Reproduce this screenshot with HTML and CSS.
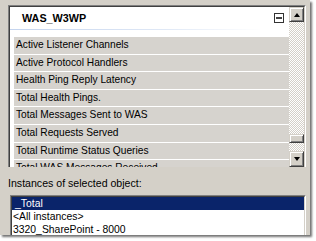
FILE: index.html
```html
<!DOCTYPE html>
<html>
<head>
<meta charset="utf-8">
<link rel="stylesheet" href="styles.css">
</head>
<body>
<div class="shot">
  <div class="box">
    <div class="box-in">
      <div class="main">
        <div class="head">
          <span class="title">WAS_W3WP</span>
          <span class="collapse"><span class="minus"></span></span>
        </div>
        <div class="rows">
          <div class="row">Active Listener Channels</div>
          <div class="row">Active Protocol Handlers</div>
          <div class="row">Health Ping Reply Latency</div>
          <div class="row">Total Health Pings.</div>
          <div class="row">Total Messages Sent to WAS</div>
          <div class="row">Total Requests Served</div>
          <div class="row">Total Runtime Status Queries</div>
          <div class="row">Total WAS Messages Received</div>
        </div>
      </div>
      <div class="scroll">
        <div class="btn up"><span class="tri-up"></span></div>
        <div class="track grow"></div>
        <div class="btn thumb"></div>
        <div class="track small"></div>
        <div class="btn down"><span class="tri-down"></span></div>
      </div>
    </div>
  </div>
  <div class="label">Instances of selected object:</div>
  <div class="inst">
    <div class="inst-in">
      <div class="item sel">_Total</div>
      <div class="item">&lt;All instances&gt;</div>
      <div class="item">3320_SharePoint - 8000</div>
    </div>
  </div>
</div>
</body>
</html>
```
FILE: styles.css
```css
html, body {
  margin: 0;
  background: #fff;
}
body {
  width: 316px;
  height: 241px;
  overflow: hidden;
}
.shot {
  width: 310px;
  height: 235px;
  box-sizing: border-box;
  padding: 5px 0 0 8px;
  background: #d4d0c8;
  box-shadow: 2px 2px 2px rgba(0, 0, 0, 0.55);
  overflow: hidden;
  font-family: "Liberation Sans", Arial, sans-serif;
  color: #000;
}
.box {
  width: 298px;
  height: 162px;
  box-sizing: border-box;
  border-style: solid;
  border-width: 1px 1px 0 1px;
  border-color: #808080 #fff #808080 #808080;
}
.box-in {
  height: 100%;
  box-sizing: border-box;
  border-style: solid;
  border-width: 1px 1px 0 1px;
  border-color: #404040 #d4d0c8 #404040 #404040;
  display: flex;
}
.main {
  flex: 1;
  min-width: 0;
  background: #fff;
  overflow: hidden;
}
.head {
  height: 22px;
  display: flex;
  align-items: center;
  justify-content: space-between;
  padding: 0 5px 0 12px;
  border-bottom: 1px solid transparent;
  border-image: linear-gradient(90deg, #c4d4ee, #dfe8f6 55%, #fff 90%) 1;
}
.title {
  font-weight: bold;
  font-size: 10.8px;
}
.collapse {
  width: 10px;
  height: 10px;
  box-sizing: border-box;
  border: 1px solid #333;
  display: flex;
  align-items: center;
  justify-content: center;
}
.minus {
  width: 6px;
  height: 2px;
  background: #444;
}
.rows {
  margin: 6px 0 0 4px;
}
.row {
  height: 17.6px;
  box-sizing: border-box;
  border-top: 1px solid #fff;
  background: #d6d3ce;
  padding-left: 2px;
  font-size: 10.2px;
  line-height: 16.6px;
  white-space: nowrap;
}
.scroll {
  width: 15px;
  display: flex;
  flex-direction: column;
}
.btn {
  box-sizing: border-box;
  background: #d4d0c8;
  border: 1px solid;
  border-color: #d4d0c8 #404040 #404040 #d4d0c8;
  box-shadow: inset 1px 1px 0 #fff, inset -1px -1px 0 #808080;
  display: flex;
  align-items: center;
  justify-content: center;
}
.up { height: 15px; }
.down { height: 16px; }
.thumb { height: 9px; }
.track {
  background: repeating-conic-gradient(#fff 0 25%, #d4d0c8 0 50%) 0 0 / 2px 2px;
}
.grow { flex: 1; }
.small { height: 8px; }
.tri-up, .tri-down {
  width: 0;
  height: 0;
  border-left: 3.5px solid transparent;
  border-right: 3.5px solid transparent;
}
.tri-up { border-bottom: 4px solid #000; }
.tri-down { border-top: 4px solid #000; }
.label {
  margin-top: 10px;
  font-size: 10.6px;
  line-height: 13px;
  white-space: nowrap;
}
.inst {
  margin: 5px 0 0 2px;
  width: 296px;
  box-sizing: border-box;
  border: 1px solid;
  border-color: #808080 #fff #fff #808080;
}
.inst-in {
  border: 1px solid;
  border-color: #404040 #d4d0c8 #d4d0c8 #404040;
  background: #fff;
  height: 50px;
}
.item {
  height: 13px;
  line-height: 13px;
  padding-left: 1px;
  font-size: 10.4px;
  white-space: nowrap;
}
.sel {
  background: #0a246a;
  color: #fff;
  padding-left: 3px;
}
```
